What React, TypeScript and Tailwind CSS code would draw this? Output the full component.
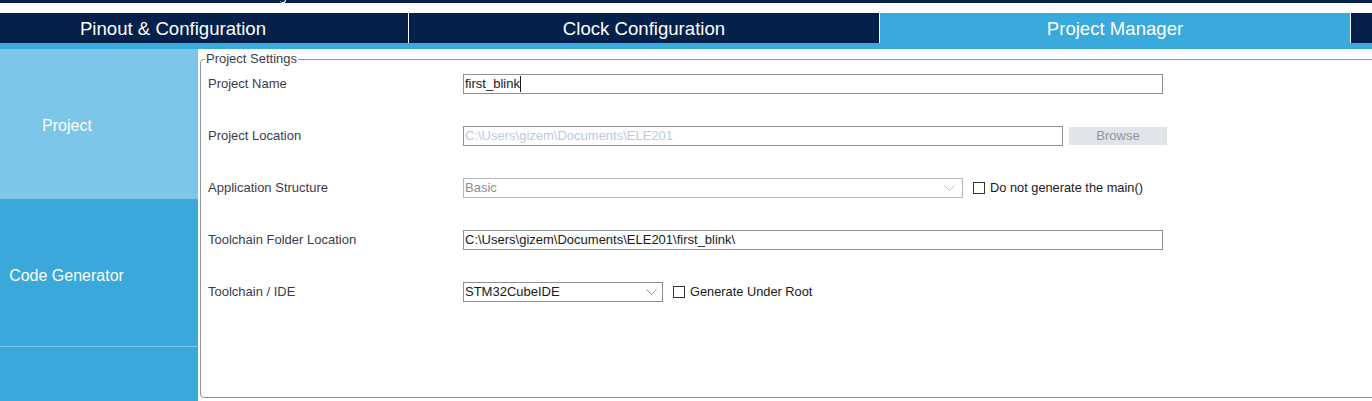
import React from 'react';

const navy = 'bg-[#03214a]';

function Chevron({ color }: { color: string }) {
  return (
    <svg width="11" height="7" viewBox="0 0 11 7" className="shrink-0">
      <path d="M0.5 0.5 L5.5 5.5 L10.5 0.5" fill="none" stroke={color} strokeWidth="1" />
    </svg>
  );
}

function Checkbox({ label }: { label: string }) {
  return (
    <div className="flex items-center gap-[5px] ml-[10px]">
      <div className="w-[12px] h-[12px] border border-[#333333] bg-white" />
      <span className="text-[12.8px] text-[#1a1a1a]">{label}</span>
    </div>
  );
}

function Row({ label, children }: { label: string; children: React.ReactNode }) {
  return (
    <div className="flex items-center h-[52px]">
      <div className="w-[255px] shrink-0 text-[13px] text-[#3c3c4c]">{label}</div>
      <div className="flex items-center">{children}</div>
    </div>
  );
}

export default function App() {
  return (
    <div
      className="w-[1372px] h-[401px] overflow-hidden bg-white flex flex-col"
      style={{ fontFamily: '"Liberation Sans", Arial, sans-serif' }}
    >
      {/* Top strip */}
      <div className={`h-[3px] ${navy} flex`}>
        <div className="ml-[280px] mt-[-3px] w-[6px] h-[6px] rounded-full border-b border-r border-white" />
      </div>
      <div className="h-[10px]" />

      {/* Tabs */}
      <div className="h-[30px] flex">
        <div className={`w-[408px] ${navy} flex items-center justify-center pr-[62px] pt-[2px] text-white text-[18.6px]`}>
          Pinout &amp; Configuration
        </div>
        <div className="w-[1px] bg-white" />
        <div className={`w-[470px] ${navy} flex items-center justify-center pt-[2px] text-white text-[18.6px]`}>
          Clock Configuration
        </div>
        <div className="w-[1px] bg-white" />
        <div className="w-[470px] bg-[#3aa9db] flex items-center justify-center pt-[2px] text-white text-[18.6px]">
          Project Manager
        </div>
        <div className="w-[1px] bg-white" />
        <div className={`flex-1 ${navy}`} />
      </div>
      <div className="h-[6px] bg-[#3aa9db]" />

      {/* Body */}
      <div className="flex flex-1">
        {/* Sidebar */}
        <div className="w-[198px] shrink-0 flex flex-col">
          <div className="h-[150px] bg-[#7bc6e9] flex items-center pt-[4px]">
            <div className="w-[134px] text-center text-white text-[16px]">Project</div>
          </div>
          <div className="h-[147px] bg-[#3aa8da] flex items-center pt-[6px]">
            <div className="w-[133px] text-center text-white text-[16px]">Code Generator</div>
          </div>
          <div className="h-[1px] bg-[#7fc6e8]" />
          <div className="flex-1 bg-[#3aa8da]" />
        </div>

        {/* Settings */}
        <div className="flex-1 pl-[2px] pt-[2px]">
          <fieldset className="h-[347px] mr-[-10px] border border-[#8e959b] rounded-[4px] pl-[7px]">
            <legend className="ml-[-3px] px-[1px] text-[13px] leading-[16px] text-[#3c3c4c]">
              Project Settings
            </legend>
            <div className="mt-[-9px]">
              <Row label="Project Name">
                <div className="w-[700px] h-[20px] border border-[#8a9096] flex items-center pl-[1px] text-[13px] text-[#1a1a1a]">
                  first_blink
                  <div className="w-[1px] h-[16px] bg-[#1a1a1a]" />
                </div>
              </Row>
              <Row label="Project Location">
                <div className="w-[600px] h-[20px] border border-[#8a9096] flex items-center pl-[1px] text-[13px] text-[#b7cbe2]">
                  C:\Users\gizem\Documents\ELE201
                </div>
                <div className="ml-[6px] w-[98px] h-[18px] bg-[#e1e4e8] flex items-center justify-center text-[13px] text-[#8e959c]">
                  Browse
                </div>
              </Row>
              <Row label="Application Structure">
                <div className="w-[500px] h-[20px] border border-[#b4b8bc] flex items-center justify-between pl-[1px] pr-[7px] text-[13px] text-[#8c8f93]">
                  Basic
                  <Chevron color="#c2c6ca" />
                </div>
                <Checkbox label="Do not generate the main()" />
              </Row>
              <Row label="Toolchain Folder Location">
                <div className="w-[700px] h-[20px] border border-[#8a9096] flex items-center pl-[1px] text-[13px] text-[#1a1a1a]">
                  C:\Users\gizem\Documents\ELE201\first_blink\
                </div>
              </Row>
              <Row label="Toolchain / IDE">
                <div className="w-[200px] h-[20px] border border-[#8a9096] flex items-center justify-between pl-[1px] pr-[5px] text-[13px] text-[#1a1a1a]">
                  STM32CubeIDE
                  <Chevron color="#8a9096" />
                </div>
                <Checkbox label="Generate Under Root" />
              </Row>
            </div>
          </fieldset>
        </div>
      </div>
    </div>
  );
}
